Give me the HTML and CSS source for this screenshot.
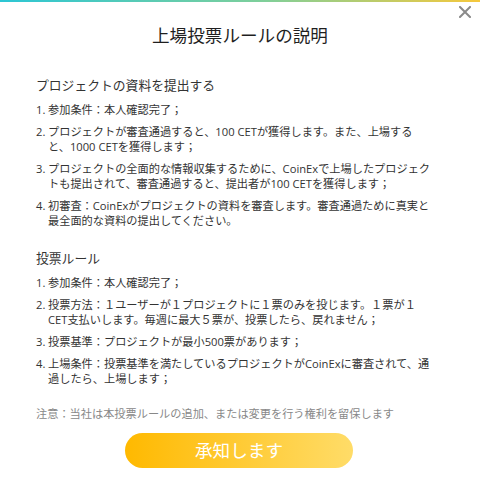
FILE: index.html
```html
<!DOCTYPE html>
<html lang="ja">
<head>
  <meta charset="UTF-8" />
  <meta name="viewport" content="width=device-width, initial-scale=1.0"/>
  <title>上場投票ルールの説明</title>
  <link rel="stylesheet" href="styles.css">
</head>
<body>
  <div class="modal">
    <div class="top-bar"></div>

    <button class="close" aria-label="閉じる">
      <svg viewBox="0 0 12 12" width="12" height="12">
        <path d="M1 1 L11 11 M11 1 L1 11" stroke="#8a8a8a" stroke-width="2" stroke-linecap="square" fill="none"/>
      </svg>
    </button>

    <h2 class="title">上場投票ルールの説明</h2>

    <div class="content">
      <div class="section">
        <h3>プロジェクトの資料を提出する</h3>
        <ol class="rules">
          <li><span class="num">1.</span><span>参加条件：本人確認完了；</span></li>
          <li><span class="num">2.</span><span>プロジェクトが審査通過すると、100 CETが獲得します。また、上場すると、1000 CETを獲得します；</span></li>
          <li><span class="num">3.</span><span>プロジェクトの全面的な情報収集するために、CoinExで上場したプロジェクトも提出されて、審査通過すると、提出者が100 CETを獲得します；</span></li>
          <li><span class="num">4.</span><span>初審査：CoinExがプロジェクトの資料を審査します。審査通過ために真実と最全面的な資料の提出してください。</span></li>
        </ol>
      </div>

      <div class="section">
        <h3>投票ルール</h3>
        <ol class="rules">
          <li><span class="num">1.</span><span>参加条件：本人確認完了；</span></li>
          <li><span class="num">2.</span><span>投票方法：１ユーザーが１プロジェクトに１票のみを投じます。１票が１ CET支払いします。毎週に最大５票が、投票したら、戻れません；</span></li>
          <li><span class="num">3.</span><span>投票基準：プロジェクトが最小500票があります；</span></li>
          <li><span class="num">4.</span><span>上場条件：投票基準を満たしているプロジェクトがCoinExに審査されて、通過したら、上場します；</span></li>
        </ol>
      </div>

      <p class="note">注意：当社は本投票ルールの追加、または変更を行う権利を留保します</p>
    </div>

    <div class="actions">
      <button class="confirm">承知します</button>
    </div>
  </div>
</body>
</html>
```

FILE: styles.css
```css
body {
  font-family: 'Open Sans', 'Noto Sans CJK JP', sans-serif;
  margin: 0;
  padding: 0;
  background-color: #fff;
}

.modal {
  position: relative;
  width: 480px;
  height: 496px;
  background-color: #fff;
  overflow: hidden;
}

.top-bar {
  height: 2px;
  background: linear-gradient(90deg, #2cc6d4, #7fcf9a 55%, #f6c83c);
}

.close {
  position: absolute;
  top: 6px;
  right: 9px;
  width: 12px;
  height: 12px;
  padding: 0;
  border: none;
  background: none;
  cursor: pointer;
}

.close svg {
  display: block;
}

.title {
  margin: 21px 0 0;
  text-align: center;
  font-size: 17.6px;
  line-height: 24px;
  font-weight: normal;
  color: #1f1f1f;
}

.content {
  padding: 0 46px 0 36px;
}

.section {
  margin-top: 21px;
}

.section:first-child {
  margin-top: 29px;
}

.section h3 {
  margin: 0;
  font-size: 12.8px;
  line-height: 19px;
  font-weight: normal;
  color: #333;
}

.rules {
  list-style: none;
  margin: 0;
  padding: 0;
}

.rules li {
  display: flex;
  margin-top: 7px;
  font-size: 11.2px;
  line-height: 15px;
  color: #333;
}

.rules .num {
  flex: 0 0 12px;
}

.note {
  margin: 20px 0 0;
  font-size: 11.2px;
  line-height: 15px;
  color: #888;
}

.actions {
  display: flex;
  justify-content: center;
  margin-top: 12px;
  padding-right: 2px;
}

.confirm {
  width: 228px;
  height: 35px;
  border: none;
  border-radius: 18px;
  background: linear-gradient(90deg, #ffb900, #ffdc68);
  color: #fff;
  font-family: 'Open Sans', 'Noto Sans CJK JP', sans-serif;
  font-size: 17.6px;
  line-height: 35px;
  padding: 0;
  cursor: pointer;
}
```
